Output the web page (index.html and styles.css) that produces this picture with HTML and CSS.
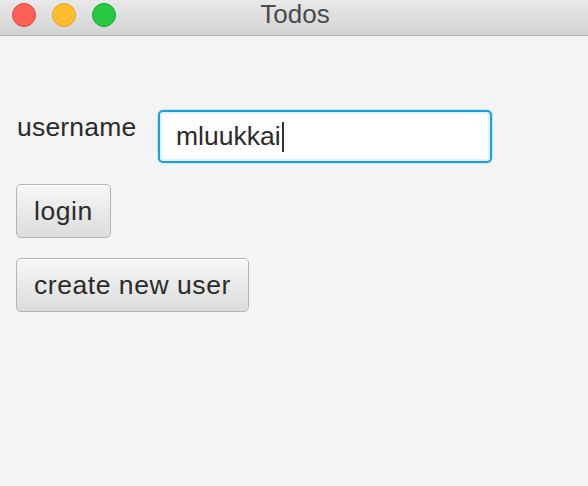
FILE: index.html
```html
<!DOCTYPE html>
<html>
<head>
<meta charset="utf-8">
<link rel="stylesheet" href="styles.css">
</head>
<body>
<div class="window">
  <header class="titlebar">
    <div class="lights">
      <span class="light red"></span>
      <span class="light yellow"></span>
      <span class="light green"></span>
    </div>
    <div class="title">Todos</div>
  </header>
  <main class="content">
    <div class="row">
      <label class="label">username</label>
      <div class="field"><span class="value">mluukkai</span><span class="caret"></span></div>
    </div>
    <button class="btn btn-login">login</button>
    <button class="btn btn-create">create new user</button>
  </main>
</div>
</body>
</html>
```

FILE: styles.css
```css
html, body {
  margin: 0;
  padding: 0;
  background: #f4f4f4;
}
body {
  font-family: "Liberation Sans", Arial, sans-serif;
  color: #2b2b2b;
  width: 588px;
  height: 486px;
  overflow: hidden;
}
.titlebar {
  height: 35px;
  border-bottom: 1px solid #b3b3b3;
  background: linear-gradient(#e9e9e9, #d2d2d2);
  display: grid;
  align-items: center;
}
.lights, .title {
  grid-area: 1 / 1;
}
.lights {
  display: flex;
  gap: 16px;
  padding-left: 12px;
  margin-top: -6px;
}
.light {
  width: 24px;
  height: 24px;
  border-radius: 50%;
  box-sizing: border-box;
}
.red { background: #fe5f57; border: 1px solid #e2463f; }
.yellow { background: #febc2e; border: 1px solid #e0a023; }
.green { background: #28c840; border: 1px solid #17a82c; }
.title {
  text-align: center;
  font-size: 26px;
  color: #4a4a4a;
  margin-top: -6px;
  padding-left: 2px;
}
.content {
  padding: 0 16px;
  display: flex;
  flex-direction: column;
  align-items: flex-start;
}
.row {
  display: flex;
  align-items: flex-start;
  margin-top: 74px;
}
.label {
  font-size: 26.5px;
  line-height: 30px;
  margin-top: 2px;
  margin-left: 1px;
  width: 141px;
  letter-spacing: 0.2px;
}
.field {
  box-sizing: border-box;
  width: 334px;
  height: 53px;
  border: 2px solid #1aa0dc;
  border-radius: 5px;
  background: #fff;
  box-shadow: 0 0 0 1px #cbe6f4, inset 0 0 0 2px #e3f2fa;
  display: flex;
  align-items: center;
  padding-left: 16px;
  font-size: 26.5px;
}
.caret {
  width: 2px;
  height: 30px;
  background: #333;
  margin-left: 1px;
}
.btn {
  font-family: inherit;
  font-size: 26.5px;
  letter-spacing: 0.55px;
  color: #2b2b2b;
  height: 54px;
  padding: 0 17px;
  border: 1px solid #b4b4b4;
  border-radius: 5px;
  background: linear-gradient(#f7f7f7, #dcdcdc);
  box-shadow: inset 0 1px 0 #ffffff;
}
.btn-login {
  margin-top: 21px;
}
.btn-create {
  margin-top: 20px;
}
```
